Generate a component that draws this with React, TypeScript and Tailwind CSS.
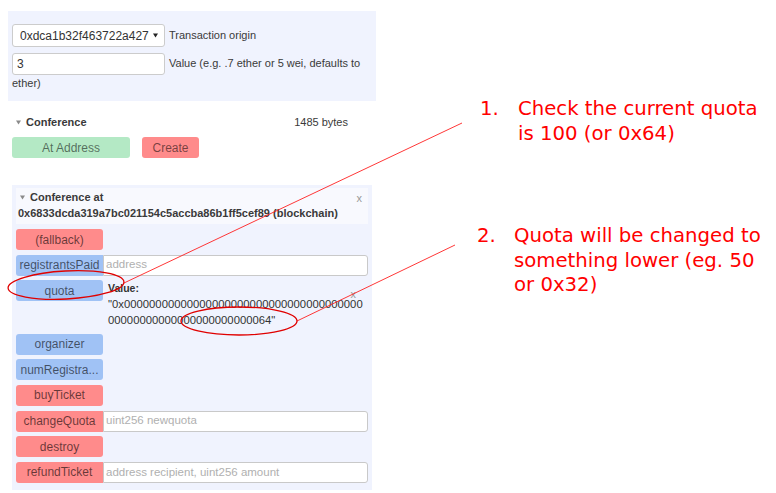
import React from "react";

const Tri = ({ color = "#888", w = 6, h = 5 }: { color?: string; w?: number; h?: number }) => (
  <svg width={w} height={h} viewBox="0 0 6 5" className="inline-block shrink-0">
    <polygon points="0,0 6,0 3,5" fill={color} />
  </svg>
);

const btn =
  "w-[87px] h-[21px] shrink-0 rounded-[3px] flex items-center justify-center text-[12px] text-[rgba(0,0,0,0.6)] overflow-hidden whitespace-nowrap";
const red = "bg-[#ff8b8b]";
const blue = "bg-[#a0c2f5]";

const FnInput = ({ ph }: { ph: string }) => (
  <div className="h-[21px] flex-1 bg-white border border-[#c9c9c9] rounded-r-[3px] flex items-center pl-[2px] text-[11.5px] text-[#b0b0b0] whitespace-nowrap overflow-hidden">
    {ph}
  </div>
);

export default function App() {
  return (
    <div
      className="relative w-[776px] h-[493px] bg-white overflow-hidden text-[#3a3a3a]"
      style={{ fontFamily: '"Liberation Sans", Arial, sans-serif' }}
    >
      {/* Top panel */}
      <div className="ml-[8px] pt-[11px]">
        <div className="w-[368px] bg-[#f0f3fe] pl-[4px] pt-[13px] pb-[10px]">
          <div className="flex items-center h-[23px]">
            <div className="w-[153px] h-[23px] bg-white border border-[#cccccc] rounded-[3px] flex items-center pl-[7px] pr-[4px]">
              <span className="w-[129px] overflow-hidden whitespace-nowrap text-[12px] text-[#333]">
                0xdca1b32f463722a427(
              </span>
              <span className="ml-[4px] flex items-center">
                <Tri color="#222" w={5} h={5} />
              </span>
            </div>
            <span className="ml-[4px] text-[11px]">Transaction origin</span>
          </div>
          <div className="mt-[6px] text-[11px] leading-[16px] w-[364px]">
            <span className="inline-flex align-middle w-[153px] h-[22px] bg-white border border-[#cccccc] rounded-[3px] items-center pl-[4px] text-[12px] text-[#333]">
              3
            </span>
            <span className="ml-[4px]">Value (e.g. .7 ether or 5 wei, defaults to ether)</span>
          </div>
        </div>
      </div>

      {/* Conference row */}
      <div className="ml-[12px] mt-[13px]">
        <div className="w-[336px] h-[16px] flex items-center justify-between text-[11px]">
          <div className="flex items-center">
            <span className="ml-[4px] flex items-center">
              <Tri color="#8a8a8a" w={5} h={5} />
            </span>
            <span className="ml-[5px] font-bold">Conference</span>
          </div>
          <span>1485 bytes</span>
        </div>
        <div className="mt-[7px] flex">
          <div className="w-[118px] h-[21px] rounded-[3px] bg-[#b4e9c5] flex items-center justify-center text-[12px] text-[rgba(0,0,0,0.55)]">
            At Address
          </div>
          <div className="ml-[12px] w-[57px] h-[21px] rounded-[3px] bg-[#ff8b8b] flex items-center justify-center text-[12px] text-[rgba(0,0,0,0.55)]">
            Create
          </div>
        </div>
      </div>

      {/* Instance panel */}
      <div className="ml-[12px] mt-[27px] w-[360px] bg-[#f0f3fe] pt-[3px] px-[4px] pb-[7px]">
        <div className="relative bg-[#f8f9fe] px-[2px] pt-[1px] pb-[3px] text-[11px] leading-[16px] font-bold">
          <div className="flex items-center">
            <span className="ml-[2px] flex items-center">
              <Tri color="#8a8a8a" w={5} h={5} />
            </span>
            <span className="ml-[5px]">Conference at</span>
          </div>
          <div>0x6833dcda319a7bc021154c5accba86b1ff5cef89 (blockchain)</div>
          <span className="absolute right-[6px] top-[2px] text-[11px] font-normal text-[#999]">x</span>
        </div>

        <div className="mt-[5px] flex flex-col gap-[4.6px]">
          <div className="flex">
            <div className={`${btn} ${red}`}>(fallback)</div>
          </div>
          <div className="flex">
            <div className={`${btn} ${blue} rounded-r-none`}>registrantsPaid</div>
            <FnInput ph="address" />
          </div>
          <div className="flex items-start">
            <div className={`${btn} ${blue}`}>quota</div>
            <div className="relative flex-1 pl-[5px] pb-[1px] leading-[16px] text-[#333]">
              <div className="text-[10.5px] font-bold">Value:</div>
              <div className="text-[11.3px] whitespace-nowrap">"0x00000000000000000000000000000000000000</div>
              <div className="text-[11.3px] whitespace-nowrap">00000000000000000000000064"</div>
              <span className="absolute right-[12px] top-[6px] text-[11px] text-[#999]">x</span>
            </div>
          </div>
          <div className="flex">
            <div className={`${btn} ${blue}`}>organizer</div>
          </div>
          <div className="flex">
            <div className={`${btn} ${blue}`}>numRegistra...</div>
          </div>
          <div className="flex">
            <div className={`${btn} ${red}`}>buyTicket</div>
          </div>
          <div className="flex">
            <div className={`${btn} ${red} rounded-r-none`}>changeQuota</div>
            <FnInput ph="uint256 newquota" />
          </div>
          <div className="flex">
            <div className={`${btn} ${red}`}>destroy</div>
          </div>
          <div className="flex">
            <div className={`${btn} ${red} rounded-r-none`}>refundTicket</div>
            <FnInput ph="address recipient, uint256 amount" />
          </div>
        </div>
      </div>

      {/* Annotations overlay */}
      <svg className="absolute left-0 top-0 pointer-events-none" width={776} height={493}>
        <line x1={462} y1={123} x2={124} y2={283} stroke="#ff2020" strokeWidth={0.9} />
        <line x1={455} y1={245} x2={297} y2={321} stroke="#ff2020" strokeWidth={0.9} />
        <ellipse cx={66} cy={285} rx={58} ry={14} fill="none" stroke="#e00000" strokeWidth={1.3} transform="rotate(-3 66 285)" />
        <ellipse cx={239} cy={321} rx={58} ry={14} fill="none" stroke="#e00000" strokeWidth={1.3} />
      </svg>

      <div
        className="absolute left-[480px] top-[97px] flex text-[19.7px] leading-[24.5px] text-[#ff0000]"
        style={{ fontFamily: '"DejaVu Sans", sans-serif' }}
      >
        <span className="w-[38px]">1.</span>
        <span>
          Check the current quota
          <br />
          is 100 (or 0x64)
        </span>
      </div>
      <div
        className="absolute left-[477px] top-[224px] flex text-[19.7px] leading-[24.5px] text-[#ff0000]"
        style={{ fontFamily: '"DejaVu Sans", sans-serif' }}
      >
        <span className="w-[37px]">2.</span>
        <span className="whitespace-nowrap">
          Quota will be changed to
          <br />
          something lower (eg. 50
          <br />
          or 0x32)
        </span>
      </div>
    </div>
  );
}
